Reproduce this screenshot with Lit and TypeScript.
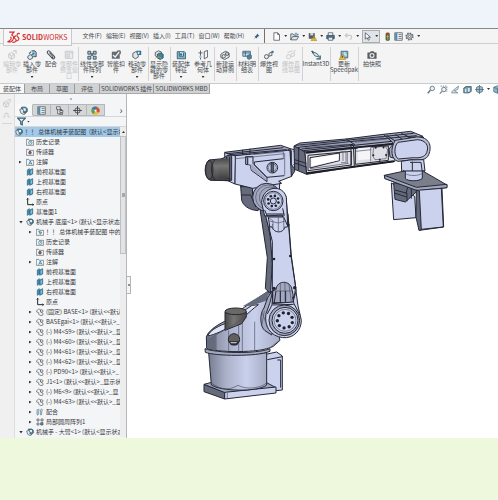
import { LitElement, html, svg, css } from "lit";
import { customElement, property, state } from "lit/decorators.js";
import { classMap } from "lit/directives/class-map.js";

const D = "#4a4f55";
const B = "#2f7396";
const L = "#9cc3d6";

// Every glyph is drawn on a 24 by 24 grid.
const GLYPHS: Record<string, unknown> = {
  ds: svg`<path d="M4 2H13L8 8M9 8C14 9 13 17 7 20H1C7 17 10 13 6 11M17 9C11 10 14 14 16 15C18 18 16 21 10 21M24 5C19 3 17 8 20 11C24 14 21 19 16 18" fill="none" stroke="#d62b2f" stroke-width="2"/>`,
  pin: svg`<path d="M14 2L22 10L18 11L14 15L13 19L9 15L2 22L8 14L5 11L9 10L13 6Z" fill="#2d6390"/>`,
  page: svg`<path d="M5 2H15L20 7V22H5ZM15 2V7H20" fill="#fff" stroke="${D}" stroke-width="2"/>`,
  open: svg`<path d="M2 21V5H8L10 8H16V12M2 21L7 12H23L18 21Z" fill="#d8e6ec" stroke="${D}" stroke-width="2"/><path d="M12 6C15 1 20 3 20 8M17 6L20 9L23 5" fill="none" stroke="${B}" stroke-width="2"/>`,
  save: svg`<path d="M2 3H18V18H2Z" fill="#565c63"/><path d="M6 3H14V9H6Z" fill="#d7dde0"/><path d="M16 10L24 23H8Z" fill="#f1c62c" stroke="#6c5a1b"/><path d="M16 14V18M16 20V21" stroke="#333" stroke-width="2"/>`,
  print: svg`<path d="M6 9V2H18V9" fill="#fff" stroke="${D}" stroke-width="2"/><path d="M2 9H22V18H2Z" fill="#47788f" stroke="#24475a" stroke-width="2"/><path d="M6 14H18V22H6Z" fill="#e7f0f3" stroke="${D}" stroke-width="2"/>`,
  undo: svg`<path d="M9 4L3 9L9 14M4 9H15C22 9 22 19 15 20" fill="none" stroke="#c7c9cb" stroke-width="3"/>`,
  cursor: svg`<path d="M6 2V19L11 15L14 22L17 20L14 14H20Z" fill="#fff" stroke="#454c55" stroke-width="2"/>`,
  light: svg`<rect x="7" y="1" width="11" height="22" rx="4" fill="#4d5a43"/><circle cx="12.500" cy="6" r="3" fill="#e03a2c"/><circle cx="12.500" cy="12" r="3" fill="#e6bd3d"/><circle cx="12.500" cy="18" r="3" fill="#54b04a"/>`,
  props: svg`<path d="M2 2H22V22H2Z" fill="#f7fafb" stroke="${D}" stroke-width="2"/><path d="M3 3H9V21H3Z" fill="#4a8cab"/><path d="M12 7H20M12 12H20M12 17H20" stroke="${D}" stroke-width="2"/>`,
  gear: svg`<circle cx="12" cy="12" r="9" fill="none" stroke="#6c7074" stroke-width="4" stroke-dasharray="4 3"/><circle cx="12" cy="12" r="7" fill="#f2f2f2" stroke="${D}" stroke-width="2"/><circle cx="12" cy="12" r="3" fill="none" stroke="${D}" stroke-width="2"/>`,
  ghost: svg`<path d="M4 10L11 6L18 10V18L11 22L4 18ZM4 10L11 14L18 10M11 14V22M14 3L22 1V9" fill="#ededed" stroke="#c2c4c6" stroke-width="2"/>`,
  insert: svg`<path d="M2 15L8 11L13 14V20L7 23L2 20Z" fill="#dfe5e8" stroke="${D}" stroke-width="2"/><path d="M11 2H19L22 6V16H15" fill="${L}" stroke="#333b44" stroke-width="2"/><path d="M10 4L5 9M17 7L10 13" stroke="${B}" stroke-width="3"/>`,
  clip: svg`<path d="M5 9L15 20C18 23 23 19 20 15L9 3C6 0 1 4 4 8L14 18C16 19 18 17 16 15L8 6" fill="none" stroke="${D}" stroke-width="2.500"/>`,
  preview: svg`<path d="M3 3H21V20H3ZM3 7H21M7 11H13V17H7Z" fill="#eee" stroke="#c2c4c6" stroke-width="2"/>`,
  pattern: svg`<path d="M2 3H9V10H2ZM15 3H22V10H15ZM2 15H9V22H2ZM15 15H22V22H15Z" fill="${L}" stroke="#344b58" stroke-width="2"/><path d="M9 7L15 15M15 7L9 15" stroke="#333" stroke-width="2"/>`,
  smart: svg`<path d="M2 4H21V21H2Z" fill="#656c72"/><path d="M5 12L10 17L21 3" fill="none" stroke="#f4f4f4" stroke-width="3"/><path d="M14 3L22 2V10" fill="none" stroke="#222" stroke-width="2"/>`,
  move: svg`<path d="M2 8L9 4L15 8V17L8 21L2 17Z" fill="#e0e5e8" stroke="${D}" stroke-width="2"/><path d="M10 2H22V12H13Z" fill="#2d6e92"/><path d="M13 7H19M16 4V10" stroke="#fff" stroke-width="2"/>`,
  hide: svg`<path d="M3 6L11 2L18 5V14L10 18L3 14Z" fill="#dfe7eb" stroke="${D}" stroke-width="2"/><path d="M8 10L15 7L22 10V19L15 23L8 19Z" fill="#42839f" stroke="#24536b" stroke-width="2"/><path d="M3 20C8 15 14 16 18 21" fill="none" stroke="#df9e3c" stroke-width="2"/>`,
  feature: svg`<path d="M3 4H20L23 7V21H3Z" fill="#89b6cb" stroke="#31586e" stroke-width="2"/><path d="M8 4V15H18V7" fill="#e2edf2" stroke="#31586e" stroke-width="2"/><circle cx="12" cy="11" r="3" fill="${B}"/>`,
  ref: svg`<path d="M6 1V23M1 7H11M15 4L23 1V17L15 21Z" fill="none" stroke="${D}" stroke-width="2"/><circle cx="6" cy="16" r="3" fill="#9fc0ce"/>`,
  motion: svg`<path d="M2 10L13 3L22 8V17L11 23L2 18Z" fill="#e7e9ea" stroke="${D}" stroke-width="2"/><circle cx="9" cy="15" r="4" fill="none" stroke="${D}" stroke-width="2"/><circle cx="17" cy="9" r="4" fill="#c6cacc" stroke="${D}" stroke-width="2"/>`,
  bom: svg`<path d="M2 3H20V15H2ZM2 7H20M8 3V15" fill="#c8dfe9" stroke="#315d75" stroke-width="2"/><path d="M13 13L19 10L23 13V20L17 23L12 20Z" fill="#4b829a" stroke="#27465a"/>`,
  explode: svg`<circle cx="6" cy="16" r="5" fill="#e9e9e9" stroke="${D}" stroke-width="2"/><path d="M12 8L19 5V13L12 15Z" fill="#eee" stroke="${D}" stroke-width="2"/><path d="M18 2H23V7H18Z" fill="${B}"/>`,
  sketch: svg`<circle cx="6" cy="16" r="5" fill="none" stroke="#c6c6c6" stroke-width="2"/><path d="M12 10L20 6V14L12 16ZM18 2H23M4 6L16 2" fill="none" stroke="#c6c6c6" stroke-width="2"/>`,
  hat: svg`<path d="M2 16H8V6H16V16H22" fill="none" stroke="#c6c6c6" stroke-width="2"/>`,
  instant: svg`<path d="M2 3L15 9L20 17L9 14Z" fill="#dbe9ef" stroke="#385767" stroke-width="2"/><path d="M2 2L6 8M13 21H22V13" fill="none" stroke="#215e7d" stroke-width="3"/>`,
  speed: svg`<path d="M5 3H21V19H5Z" fill="#8fbacd" stroke="#315d75" stroke-width="2"/><path d="M14 5V12H19" stroke="#fff" fill="none" stroke-width="2"/><path d="M8 10L16 23H0Z" fill="#efbd31" stroke="#745d1a"/><path d="M8 14V19" stroke="#333" stroke-width="2"/>`,
  camera: svg`<path d="M1 6H7L9 3H16L18 6H23V21H1Z" fill="#5a5f63"/><circle cx="12" cy="13" r="6" fill="#e7e9ea"/><circle cx="12" cy="13" r="3" fill="#4d565d"/>`,
  zoom: svg`<circle cx="14" cy="9" r="6" fill="#e8f1f5" stroke="#657886" stroke-width="2.500"/><path d="M9 14L2 22" stroke="#657886" stroke-width="4"/>`,
  zoomarea: svg`<path d="M4 3H21V18" fill="none" stroke="#657886" stroke-width="2" stroke-dasharray="4 2"/><circle cx="13" cy="12" r="6" fill="#eef3f5" stroke="#657886" stroke-width="2.500"/><path d="M8 17L2 23" stroke="#657886" stroke-width="3"/>`,
  pen: svg`<path d="M2 18L12 9L20 3L18 12L9 15L18 21H2Z" fill="#e0eaf0" stroke="#657886" stroke-width="2"/>`,
  section: svg`<path d="M2 8L8 4H22V17L16 21H2Z" fill="#6f94a9" stroke="#36576a" stroke-width="2"/><path d="M5 10H9V19H5ZM13 8H18V18H13Z" fill="#d7e5ec"/>`,
  view: svg`<path d="M4 6L12 3L20 6V17L12 21L4 17Z" fill="#9ebccb" stroke="#4d6c7c" stroke-width="2"/><path d="M0 12H24M12 0V24" stroke="#506c7b" stroke-width="2"/>`,
  cube: svg`<path d="M2 6L12 2L22 6V18L12 22L2 18Z" fill="#86b4c8" stroke="#477489" stroke-width="2"/><path d="M2 6L12 10L22 6M12 10V22" fill="none" stroke="#477489" stroke-width="2"/>`,
  asm: svg`<path d="M7 3H18L22 7V15L17 19L10 15L7 10Z" fill="#428099" stroke="#315262" stroke-width="2"/><path d="M11 6H18V13H12Z" fill="#e4eef2"/><path d="M2 9L8 7L12 12V18L17 20L13 23L5 19Z" fill="#dfe6e9" stroke="#4d5961" stroke-width="2"/>`,
  tree: svg`<path d="M4 2H14V9H4ZM13 12H21V17H13ZM7 9V21H13M13 19H20V23H13Z" fill="#edf0f1" stroke="${D}" stroke-width="2"/><path d="M14 8L19 12" stroke="${D}" stroke-width="3"/>`,
  target: svg`<circle cx="12" cy="12" r="7" fill="none" stroke="#293239" stroke-width="2"/><path d="M12 0V24M0 12H24" stroke="#293239" stroke-width="2"/>`,
  ball: svg`<circle cx="12" cy="12" r="11" fill="#f1ba32"/><path d="M12 12L2 7A11 11 0 0 1 18 3Z" fill="#4671bb"/><path d="M12 12L18 3A11 11 0 0 1 21 18Z" fill="#d84a3d"/><path d="M12 12L2 7A11 11 0 0 0 7 22Z" fill="#51a657"/><circle cx="12" cy="12" r="3" fill="#f7eee2"/>`,
  filter: svg`<path d="M2 3H22L14 12V21L10 19V12Z" fill="#e9f2f5" stroke="#365d72" stroke-width="3"/>`,
  history: svg`<path d="M1 4H8L10 7H23V22H1Z" fill="#eef0f1" stroke="#59636a" stroke-width="2"/><circle cx="13" cy="14" r="5" fill="#fff" stroke="#34758f" stroke-width="2"/><path d="M13 11V14H16" fill="none" stroke="#34758f" stroke-width="2"/>`,
  sensor: svg`<path d="M1 4H8L10 7H23V22H1Z" fill="#eef0f1" stroke="#59636a" stroke-width="2"/><circle cx="12" cy="14" r="4" fill="#8e6569" stroke="#444" stroke-width="2"/>`,
  note: svg`<path d="M1 4H8L10 7H23V22H1Z" fill="#eef4f7" stroke="#59636a" stroke-width="2"/><path d="M8 20L13 9L18 20M10 16H16" fill="none" stroke="#236f97" stroke-width="2"/>`,
  folder: svg`<path d="M1 4H8L10 7H23V22H1Z" fill="#eef4f7" stroke="#59636a" stroke-width="2"/><path d="M8 10L17 13L13 19Z" fill="#8cb5c7" stroke="#3d7790" stroke-width="2"/>`,
  plane: svg`<path d="M4 6L10 2V18L4 22ZM11 6L20 2V18L11 22Z" fill="#438fb0" stroke="#286480" stroke-width="2"/><path d="M14 8L18 6V16L14 18Z" fill="#8bc0d5"/>`,
  origin: svg`<path d="M5 1V20H23M2 4L5 1L8 4M20 17L23 20L20 23" fill="none" stroke="#22272b" stroke-width="3"/>`,
  part: svg`<path d="M2 8L8 3L15 6L14 12L21 16V21L15 23L8 19V14L2 12Z" fill="#f2f2f0" stroke="#555b60" stroke-width="2"/><circle cx="17" cy="9" r="4" fill="#e2e4e4" stroke="#555b60" stroke-width="2"/>`,
  mates: svg`<path d="M4 5C8 0 11 6 7 11V18C7 23 2 22 3 17V5M14 5C18 0 21 6 17 11V18C17 23 12 22 13 17V5" fill="#cfdee4" stroke="#50798a" stroke-width="2"/>`,
  circular: svg`<path d="M3 3H9V9H3ZM15 3H21V9H15ZM3 15H9V21H3Z" fill="#eef0f0" stroke="#40484d" stroke-width="2"/><path d="M14 14H21V21H14Z" fill="#5b92a8" stroke="#40484d" stroke-width="2"/>`,
};

@customElement("cad-glyph")
class CadGlyph extends LitElement {
  @property() name = "";
  static styles = css`
    :host { display: block; flex: none; width: 9px; height: 9px; }
    svg { display: block; width: 100%; height: 100%; }
  `;
  render() {
    return html`<svg viewBox="0 0 24 24" aria-hidden="true">${GLYPHS[this.name]}</svg>`;
  }
}

interface Tool { id: string; label: string; w: number; end?: boolean; off?: boolean; menu?: boolean }
const TOOLS: Tool[] = [
  { id: "ghost", label: "编辑零部件", w: 20, off: true },
  { id: "insert", label: "插入零部件", w: 20, menu: true },
  { id: "clip", label: "配合", w: 18 },
  { id: "preview", label: "零部件预览窗口", w: 18, off: true, end: true },
  { id: "pattern", label: "线性零部件阵列", w: 28, menu: true },
  { id: "smart", label: "智能扣件", w: 20 },
  { id: "move", label: "移动零部件", w: 22, menu: true, end: true },
  { id: "hide", label: "显示隐藏的零部件", w: 22, end: true },
  { id: "feature", label: "装配体特征", w: 22, menu: true },
  { id: "ref", label: "参考几何体", w: 22, menu: true, end: true },
  { id: "motion", label: "新建运动算例", w: 22, end: true },
  { id: "bom", label: "材料明细表", w: 22, end: true },
  { id: "explode", label: "爆炸视图", w: 22 },
  { id: "sketch", label: "爆炸直线草图", w: 22, off: true, end: true },
  { id: "instant", label: "Instant3D", w: 28, end: true },
  { id: "speed", label: "更新 Speedpak", w: 28, end: true },
  { id: "camera", label: "拍快照", w: 28 },
];

const MENUS = ["文件(F)", "编辑(E)", "视图(V)", "插入(I)", "工具(T)", "窗口(W)", "帮助(H)"];
const QUICK: [string, string, boolean][] = [
  ["page", "新建", true], ["open", "打开", true], ["save", "保存", true], ["print", "打印", true],
  ["undo", "撤消", true], ["cursor", "选择", true], ["light", "重建模型", false], ["props", "文件属性", false], ["gear", "选项", true],
];
const TABS = ["装配体", "布局", "草图", "评估", "SOLIDWORKS 插件", "SOLIDWORKS MBD"];
const VIEWS: [string, string][] = [["zoom", "整屏显示"], ["zoomarea", "局部放大"], ["pen", "上一视图"], ["section", "剖面视图"], ["view", "视图定向"]];
const PANES: [string, string][] = [["asm", "设计树"], ["props", "属性"], ["tree", "配置"], ["target", "尺寸"], ["ball", "外观"]];

type Mark = "" | "open" | "closed";
const TREE: [number, Mark, string, string][] = [
  [0, "", "asm", "！！ 总体机械手装配图  (默认<显示状"],
  [1, "", "history", "历史记录"],
  [1, "", "sensor", "传感器"],
  [1, "closed", "note", "注解"],
  [1, "", "plane", "前视基准面"],
  [1, "", "plane", "上视基准面"],
  [1, "", "plane", "右视基准面"],
  [1, "", "origin", "原点"],
  [1, "", "plane", "基准面1"],
  [1, "open", "asm", "机械手 底座<1> (默认<显示状态-"],
  [2, "closed", "folder", "！！ 总体机械手装配图 中的配"],
  [2, "", "history", "历史记录"],
  [2, "", "sensor", "传感器"],
  [2, "closed", "note", "注解"],
  [2, "", "plane", "前视基准面"],
  [2, "", "plane", "上视基准面"],
  [2, "", "plane", "右视基准面"],
  [2, "", "origin", "原点"],
  [2, "closed", "part", "(固定) BASE<1> (默认<<默认"],
  [2, "closed", "part", "BASEgai<1> (默认<<默认>_"],
  [2, "closed", "part", "(-) M4<59> (默认<<默认>_显"],
  [2, "closed", "part", "(-) M4<60> (默认<<默认>_显"],
  [2, "closed", "part", "(-) M4<61> (默认<<默认>_显"],
  [2, "closed", "part", "(-) M4<62> (默认<<默认>_显"],
  [2, "closed", "part", "(-) PD90<1> (默认<<默认>_"],
  [2, "closed", "part", "J1<1> (默认<<默认>_显示状"],
  [2, "closed", "part", "(-) M6<9> (默认<<默认>_显"],
  [2, "closed", "part", "(-) M4<63> (默认<<默认>_显"],
  [2, "closed", "mates", "配合"],
  [2, "closed", "circular", "局部圆周阵列1"],
  [1, "open", "asm", "机械手 - 大臂<1> (默认<显示状态"],
];

const bolts = (cx: number, cy: number, r: number, n: number, size: number) =>
  Array.from({ length: n }, (_, i) => {
    const a = (i / n) * Math.PI * 2 + 0.3;
    return svg`<circle cx=${cx + r * Math.cos(a)} cy=${cy + r * Math.sin(a)} r=${size} fill="#20222c"/>`;
  });

@customElement("robot-model")
class RobotModel extends LitElement {
  static styles = css`
    :host { display: block; flex: 1; min-width: 0; background: #fff; }
    svg { display: block; width: 100%; height: 100%; }
    .solid { stroke: #252735; stroke-width: 3; stroke-linejoin: round; }
    .line { fill: none; stroke: #252735; stroke-width: 3; stroke-linejoin: round; }
    .thin { fill: none; stroke: #4c5063; stroke-width: 2; }
    .lit { fill: #cbd2ee; }
    .mid { fill: #a2a8c0; }
    .dim { fill: #666b7c; }
    .motor { fill: url(#motor); }
    .drum { fill: url(#drum); }
  `;
  render() {
    return html`<svg viewBox="127 93 371 344" role="img" aria-label="机械手">
      <defs>
        <linearGradient id="motor" x1="0" y1="0" x2="0" y2="1"><stop offset="0" stop-color="#4c4c4c"/><stop offset=".35" stop-color="#767675"/><stop offset="1" stop-color="#414142"/></linearGradient>
        <linearGradient id="drum"><stop offset="0" stop-color="#777d92"/><stop offset=".3" stop-color="#abb1c9"/><stop offset=".65" stop-color="#c9d0ec"/><stop offset="1" stop-color="#a7adc5"/></linearGradient>
        <linearGradient id="post"><stop offset="0" stop-color="#494847"/><stop offset=".4" stop-color="#777572"/><stop offset="1" stop-color="#4b4a49"/></linearGradient>
      </defs>

      <g transform="translate(190 290) scale(.33333)">
        <path class="solid lit" d="M218 192L260 183L277 195V297L230 302Z"/>
        <path class="line" d="M232 206L277 197M262 207L272 207V290"/>
        <path class="solid dim" d="M42 280L104 304V324L42 302Z"/>
        <path class="solid mid" d="M42 280L80 270H220L258 290L105 305Z"/>
        <path class="solid lit" d="M104 304L258 288V306L104 324Z"/>
        <path class="thin" d="M112 306V322"/>
        <path class="solid drum" d="M56 185L64 282C90 301 205 304 230 282V185Z"/>
        <path class="thin" d="M66 278C100 300 120 296 144 283C170 297 210 292 230 276"/>
        <path class="solid mid" d="M45 173C75 186 200 190 240 173V181C200 198 75 195 46 184Z"/>
        <path class="solid drum" d="M49 138C54 122 75 105 104 91L177 39L235 0L270 148L250 166C210 188 75 184 50 172Z"/>
        <path d="M53 135C60 119 78 109 104 98L186 43L205 41C174 65 159 83 133 98C104 117 76 131 53 135Z" fill="#e2e5f3" stroke="#252735" stroke-width="3"/>
        <path class="dim" d="M158 46L235 0L232 28L185 44Z"/>
        <path class="solid" fill="url(#post)" d="M105 63V118L155 98L169 78V62Z"/>
        <ellipse class="solid" cx="137" cy="61" rx="32" ry="10" fill="#6b6966"/>
        <path class="thin" d="M64 139C105 116 150 95 177 64M78 132V176M116 118V180M146 102V181M157 95V180M194 92V178M240 170L270 147"/>
        <path class="dim" d="M51 141L77 133V178L52 171Z"/>
        <circle class="solid" cx="132" cy="145" r="17" fill="#62605f"/>
        <path d="M116 151H149L141 163H123Z" fill="#282b32"/><path d="M120 154H142L138 157H124Z" fill="#e6e7ec"/>
      </g>

      <g transform="translate(190 120) scale(.33333)">
        <path class="solid dim" d="M151 182L155 237C159 254 177 267 204 269L218 240L208 180Z"/>
        <path class="line" d="M155 222H182L197 258M151 197H187"/>
        <path class="solid lit" d="M186 170L270 166L268 211L289 239L280 270L211 266L188 222Z"/>
        <path class="solid lit" d="M104 95L137 105L135 189L106 176Z"/>
        <path class="solid mid" d="M104 94L272 73L301 83L285 92L137 105Z"/>
        <path class="solid lit" d="M136 104L293 88L305 90V166L266 181L275 187L188 202L135 189Z"/>
        <path class="solid dim" d="M300 88L314 98V151L304 166Z"/>
        <path class="line" d="M113 98L280 80M119 101L290 86M180 83V101M158 86V102"/>
        <path class="thin" d="M137 113L284 98V163M188 101L280 92V111M304 101L314 106"/>
        <path class="line" d="M167 107H189V127L231 170V182L184 148L181 132L167 130Z"/>
        <path class="mid" d="M170 110H177V130H186L228 172V178L184 145L181 132L170 128Z"/>
        <path class="line" d="M193 123L281 113M193 123V132L231 169L283 164M172 109V131"/>
        <circle class="solid lit" cx="247" cy="140" r="16"/><circle class="thin" cx="247" cy="140" r="12"/><path d="M243 125V151L251 155V127Z" fill="#555b73" stroke="#191c2b" stroke-width="2"/>
        <path class="solid dim" d="M96 113L106 108L111 103H125V178L105 179L96 171Z"/>
        <path class="line" d="M110 107V176M119 108V178"/>
        <path class="solid motor" d="M57 117L98 113V170L120 172V179L61 178C40 169 42 129 57 117Z"/>
        <path class="motor" d="M86 114H116V172H86Z"/>
        <ellipse class="solid" cx="58" cy="147" rx="11" ry="28" fill="#585858"/><path class="line" d="M74 118C60 132 62 166 76 177"/>
        <path class="solid lit" d="M301 83L316 87L331 102L323 132L310 139L302 128Z"/>
        <path class="line" d="M311 90C319 98 320 121 311 132M322 97C330 104 329 125 319 132M304 88V132"/>
      </g>

      <g transform="translate(190 180) scale(.33333)">
        <path class="solid dim" d="M207 65L225 88L246 190L250 270L245 340L226 323L232 230Z"/>
        <path class="solid lit" d="M215 57L288 47L296 134L303 224L317 319L311 360L240 356L247 248L240 157Z"/>
        <path class="line" d="M239 110V150L247 181L247 330L236 355M294 98L304 225L319 331"/>
        <circle class="solid mid" cx="230" cy="49" r="42"/>
        <circle class="thin" cx="234" cy="49" r="37"/><circle class="thin" cx="240" cy="50" r="32"/>
        <path class="solid lit" d="M215 65C217 14 279 8 289 49L293 131H282L277 102L224 105Z"/>
        <circle class="solid lit" cx="250" cy="60" r="29"/><circle class="thin" cx="250" cy="60" r="25"/>
        ${bolts(250, 60, 16, 8, 4)}
        <circle class="line" cx="250" cy="60" r="9"/>
        <path class="line" d="M224 87L232 106M278 82L283 104M231 99H282M229 105H280"/>
        <path class="solid lit" d="M235 108H281L294 137L284 139C280 157 253 158 246 138L239 137Z"/>
        <path class="thin" d="M238 120L265 126L286 120M265 101V151M280 101L282 145M248 129L246 141M237 111L249 119V145"/>
        <circle cx="252" cy="234" r="4" fill="#20222c"/><circle cx="301" cy="225" r="4" fill="#20222c"/><circle cx="295" cy="132" r="4" fill="#20222c"/><circle cx="252" cy="322" r="5" fill="#20222c"/><circle cx="314" cy="320" r="5" fill="#20222c"/>
        <path class="solid mid" d="M258 326C261 296 302 297 306 326L314 365H239L249 329Z"/>
        <path class="thin" d="M271 309V362M285 305V361M297 311L304 363M259 330H305"/>
      </g>

      <g transform="translate(190 290) scale(.33333)">
        <path class="solid mid" d="M246 0L233 20L222 51C208 68 210 108 225 119L245 132L252 102L234 78L247 22Z"/>
        <path class="solid lit" d="M248 2L239 38L228 68C222 105 240 135 278 140C310 143 334 119 334 88L324 44L318 1L309 33L248 38Z"/>
        <path class="line" d="M248 9L246 42L232 69M307 17L312 38L330 72M247 42L311 40M258 0L253 34M271 0V36M287 0V36"/>
        <path class="thin" d="M231 65L240 56M223 59L216 100M216 64L234 112"/>
        <circle class="solid mid" cx="283" cy="88" r="46"/><circle class="solid lit" cx="285" cy="88" r="39"/><circle class="thin" cx="285" cy="88" r="33"/>
        ${bolts(285, 88, 23, 9, 5)}
      </g>

      <g transform="translate(310 110) scale(.33333)">
        <path class="solid mid" d="M-48 105L-30 96L108 84L220 70L302 61L339 76L240 104L-13 124Z"/>
        <path class="solid dim" d="M-48 105L-15 123L-10 190L-46 175Z"/>
        <path class="solid" fill="#dfe0e5" d="M-15 123L250 98L255 151L120 169L-10 190Z"/>
        <path d="M-12 125L250 99M-10 187L252 151" stroke="#1c1d25" stroke-width="6" fill="none"/>
        <path class="line" d="M-43 103L235 75L311 67M-36 109L117 92L320 74M-26 114L130 100M-20 119L245 91M108 84L135 101M220 70L249 95M-34 108V178M-46 146L-11 157M-45 156L-10 169"/>
        <path class="thin" d="M-28 103L100 94M-16 110L112 100M135 94L231 84M130 88L222 78"/>
        <path class="line" d="M-6 133L124 121V162L-6 179ZM136 111L235 105V148L136 160ZM130 101L133 166M123 100V168M0 140L88 126V149L0 171Z"/>
        <path d="M4 142L86 130V148L4 166Z" fill="#fff"/><path d="M143 112L184 108V144L143 148Z" fill="#f5f5f8"/>
        <path class="thin" d="M92 121H108V155H93M99 125V150M112 120V158M137 121L184 116M182 106V151M191 110L225 105L233 117L228 143L195 146L188 135ZM0 173L116 157"/>
        ${bolts(209, 126, 20, 5, 3)}
        <path class="solid mid" d="M237 114L251 98L302 78L342 79L325 86L274 94L258 143L240 138Z"/>
        <path class="line" d="M230 73L260 93M256 70L284 90M274 67L306 82"/>
        <path class="solid" fill="#b9bfd2" d="M256 88L320 78C358 77 367 105 356 131C350 147 330 149 309 146L264 151C244 146 239 114 256 88Z"/>
        <path class="solid lit" d="M264 94L323 86C348 88 358 104 350 125C345 138 329 142 311 140L265 144C252 137 251 106 264 94Z"/>
        <path class="solid lit" d="M274 151L300 147L341 146L345 180L337 187L279 188L275 180Z"/>
        <path class="line" d="M278 178C300 188 327 186 344 178M300 154H333L337 184M307 152V184"/>
        <path class="solid lit" d="M244 216L251 326L318 320L314 256Z"/>
        <path class="solid dim" d="M251 215L255 265L286 273L321 241L323 232Z"/>
        <path class="line" d="M255 237L291 247V271M294 224L288 249M304 234V263M253 246L290 258"/>
        <path class="solid" fill="#7b7f8c" d="M223 193L279 181H340L411 222L410 230L322 238L224 202Z"/>
        <path class="solid mid" d="M223 193L319 229L411 220V230L322 239L225 203Z"/>
        <path class="solid lit" d="M286 180H337V202C328 212 294 211 286 203Z"/>
        <path class="thin" d="M286 188C300 196 325 195 337 187"/>
        <path class="solid lit" d="M321 238L396 232L401 348L328 358Z"/>
        <path class="solid dim" d="M319 237L328 240L334 357L327 358L318 318Z"/>
        <path class="line" d="M394 232L400 348L334 355"/>
      </g>
    </svg>`;
  }
}

@customElement("app-root")
class AppRoot extends LitElement {
  @state() private tab = 0;
  @state() private pane = 0;
  @state() private row = 0;

  static styles = css`
    :host { display: flex; flex-direction: column; min-height: 100vh; overflow: hidden; background: #edf8dc; color: #43474b; font: 6px/10px "Noto Sans CJK SC", sans-serif; }
    * { box-sizing: border-box; }
    button { font: inherit; color: inherit; margin: 0; padding: 0; border: 0; background: none; text-align: left; }
    ul { list-style: none; margin: 0; padding: 0; }
    .sky { height: 28px; background: #eef4fa; }
    .bar { display: flex; align-items: center; height: 16px; border-top: 1px solid #85888b; border-bottom: 1px solid #cdcfd0; background: #f4f4f5; white-space: nowrap; }
    .logo { display: flex; align-items: center; align-self: flex-start; gap: 2px; height: 17px; margin-left: 3px; padding: 0 3px; border: 1px solid #c6c8ca; border-top: 0; background: #f7f7f8; color: #d0312f; font-size: 7px; z-index: 1; }
    .logo cad-glyph { width: 13px; height: 13px; }
    .menus { display: flex; gap: 4px; padding-left: 11px; }
    .pin { margin-left: 9px; }
    .pin cad-glyph { width: 7px; height: 7px; }
    .quick { display: flex; align-items: center; align-self: stretch; margin-left: 4px; padding-left: 7px; border-left: 1px solid #6f7376; }
    .quick button { display: flex; align-items: center; gap: 3px; height: 13px; padding-right: 3px; }
    .quick .single { padding-right: 2px; }
    .quick .chosen { border: 1px solid #a9adb0; background: #dfe4e9; padding: 0 1px 0 0; margin-right: 3px; }
    .arrow { width: 3px; height: 2px; background: #333; clip-path: polygon(0 0, 100% 0, 50% 100%); }
    .ribbon { display: flex; height: 40px; padding: 3px 0 2px 2px; border-bottom: 1px solid #c9cbcc; background: #f4f4f5; }
    .tool { display: flex; flex: none; flex-direction: column; align-items: center; padding-top: 3px; line-height: 6px; text-align: center; }
    .tool cad-glyph { width: 10px; height: 10px; margin-bottom: 1px; }
    .tool .arrow { margin-top: auto; margin-bottom: 3px; }
    .w18 { width: 18px; } .w20 { width: 20px; } .w22 { width: 22px; } .w28 { width: 28px; }
    .end { box-shadow: 1px 0 #d0d2d3; }
    .off { color: #bfc1c3; }
    .strip { display: flex; justify-content: space-between; height: 10px; background: #fff; }
    .tabs { display: flex; border-bottom: 1px solid #a7a9ab; }
    .tabs button { min-width: 25px; padding: 0 1px; line-height: 8px; text-align: center; border-right: 1px solid #999c9e; background: #d1d2d3; white-space: nowrap; }
    .tabs .on { background: #f8f8f8; }
    .views { display: flex; align-items: center; gap: 3px; margin-right: -4px; }
    .views button { display: flex; }
    .main { display: flex; background: #fff; }
    .gutter { flex: none; width: 14px; padding: 5px 2px; background: #f0f0f1; }
    .gutter .off { display: flex; flex-direction: column; gap: 3px; padding-bottom: 3px; border-bottom: 1px solid #d6d6d7; }
    .panel { display: flex; flex: none; flex-direction: column; width: 113px; border-right: 1px solid #b4b6b8; border-left: 1px solid #dcddde; background: #f4f5f6; }
    .grip { display: flex; align-items: center; justify-content: center; height: 10px; }
    .grip i { width: 2px; height: 2px; border-radius: 50%; background: #a2a4a6; }
    .panes { display: flex; height: 12px; }
    .panes button { display: flex; align-items: center; justify-content: center; width: 18px; border: 1px solid #b5b7b9; border-left: 0; background: #d5d6d7; }
    .panes .on { border-color: transparent #b5b7b9 transparent transparent; background: #f7f8f8; }
    .panes .more { margin-left: auto; width: 10px; border: 0; background: none; font-size: 10px; }
    .filter { display: flex; align-items: center; gap: 1px; height: 11px; padding-left: 2px; border-top: 1px solid #d6d7d8; border-bottom: 1px solid #d6d7d8; }
    .body { display: flex; }
    .tree { flex: 1; min-width: 0; overflow: hidden; }
    .row { display: flex; align-items: center; gap: 2px; width: 100%; height: 10px; white-space: pre; color: #34383c; }
    .row.sel { background: #a2c9e7; }
    .row cad-glyph { width: 8px; height: 8px; }
    .d1 { padding-left: 4px; } .d2 { padding-left: 14px; }
    .mark { flex: none; width: 5px; height: 3px; }
    .closed { background: #333; clip-path: polygon(0 0, 50% 50%, 0 100%); }
    .open { background: #333; clip-path: polygon(0 0, 80% 0, 40% 100%); }
    .scroll { display: flex; flex-direction: column; flex: none; width: 6px; background: #ededee; }
    .scroll .up { display: flex; align-items: center; justify-content: center; height: 9px; }
    .scroll .up .arrow { transform: rotate(180deg); }
    .thumb { display: flex; align-items: center; justify-content: center; height: 38%; border: 1px solid #bfc1c3; background: #e2e3e4; }
    .thumb i { width: 3px; height: 4px; background: #a6a8aa; }
    .stage { position: relative; display: flex; flex: 1; min-width: 0; }
    .splitter { position: absolute; left: 0; top: 53%; display: flex; align-items: center; justify-content: center; width: 4px; height: 18px; border: 1px solid #b4b6b8; border-left: 0; background: #f4f5f6; }
    .splitter i { width: 2px; height: 2px; background: #8d9092; }
  `;

  render() {
    return html`
      <div class="sky"></div>
      <header class="bar">
        <div class="logo"><cad-glyph name="ds"></cad-glyph><span><b>SOLID</b>WORKS</span></div>
        <nav class="menus">${MENUS.map((m) => html`<button>${m}</button>`)}</nav>
        <button class="pin" aria-label="固定"><cad-glyph name="pin"></cad-glyph></button>
        <div class="quick">
          ${QUICK.map(([id, label, more]) => html`<button aria-label=${label} class=${classMap({ chosen: id === "cursor", single: !more })}>
            <cad-glyph name=${id}></cad-glyph>${more ? html`<span class="arrow"></span>` : ""}</button>`)}
        </div>
      </header>
      <div class="ribbon" role="toolbar">
        ${TOOLS.map((t) => html`<button ?disabled=${t.off} class=${classMap({ tool: true, [`w${t.w}`]: true, end: !!t.end, off: !!t.off })}>
          <cad-glyph name=${t.id}></cad-glyph>
          <span>${t.label}</span>
          ${t.menu ? html`<span class="arrow"></span>` : ""}</button>`)}
      </div>
      <div class="strip">
        <div class="tabs" role="tablist">
          ${TABS.map((t, i) => html`<button role="tab" aria-selected=${i === this.tab} class=${classMap({ on: i === this.tab })} @click=${() => (this.tab = i)}>${t}</button>`)}
        </div>
        <div class="views">
          ${VIEWS.map(([id, label]) => html`<button aria-label=${label}><cad-glyph name=${id}></cad-glyph></button>`)}
          <span class="arrow"></span>
          <button aria-label="显示样式"><cad-glyph name="cube"></cad-glyph></button>
        </div>
      </div>
      <main class="main">
        <div class="gutter"><div class="off"><cad-glyph name="ghost"></cad-glyph><cad-glyph name="hat"></cad-glyph></div></div>
        <section class="panel">
          <div class="grip"><i></i></div>
          <div class="panes" role="tablist">
            ${PANES.map(([id, label], i) => html`<button role="tab" aria-label=${label} aria-selected=${i === this.pane} class=${classMap({ on: i === this.pane })} @click=${() => (this.pane = i)}><cad-glyph name=${id}></cad-glyph></button>`)}
            <button class="more" aria-label="更多">›</button>
          </div>
          <button class="filter" aria-label="过滤"><cad-glyph name="filter"></cad-glyph><span class="arrow"></span></button>
          <div class="body">
            <ul class="tree" role="tree">
              ${TREE.map(([depth, mark, id, label], i) => html`<li role="treeitem" aria-level=${depth + 1}>
                <button class=${classMap({ row: true, [`d${depth}`]: true, sel: i === this.row })} @click=${() => (this.row = i)}>
                  ${depth ? html`<span class=${classMap({ mark: true, open: mark === "open", closed: mark === "closed" })}></span>` : ""}<cad-glyph name=${id}></cad-glyph><span>${label}</span>
                </button></li>`)}
            </ul>
            <div class="scroll"><span class="up"><span class="arrow"></span></span><div class="thumb"><i></i></div></div>
          </div>
        </section>
        <div class="stage">
          <robot-model></robot-model>
          <div class="splitter"><i></i></div>
        </div>
      </main>
    `;
  }
}
